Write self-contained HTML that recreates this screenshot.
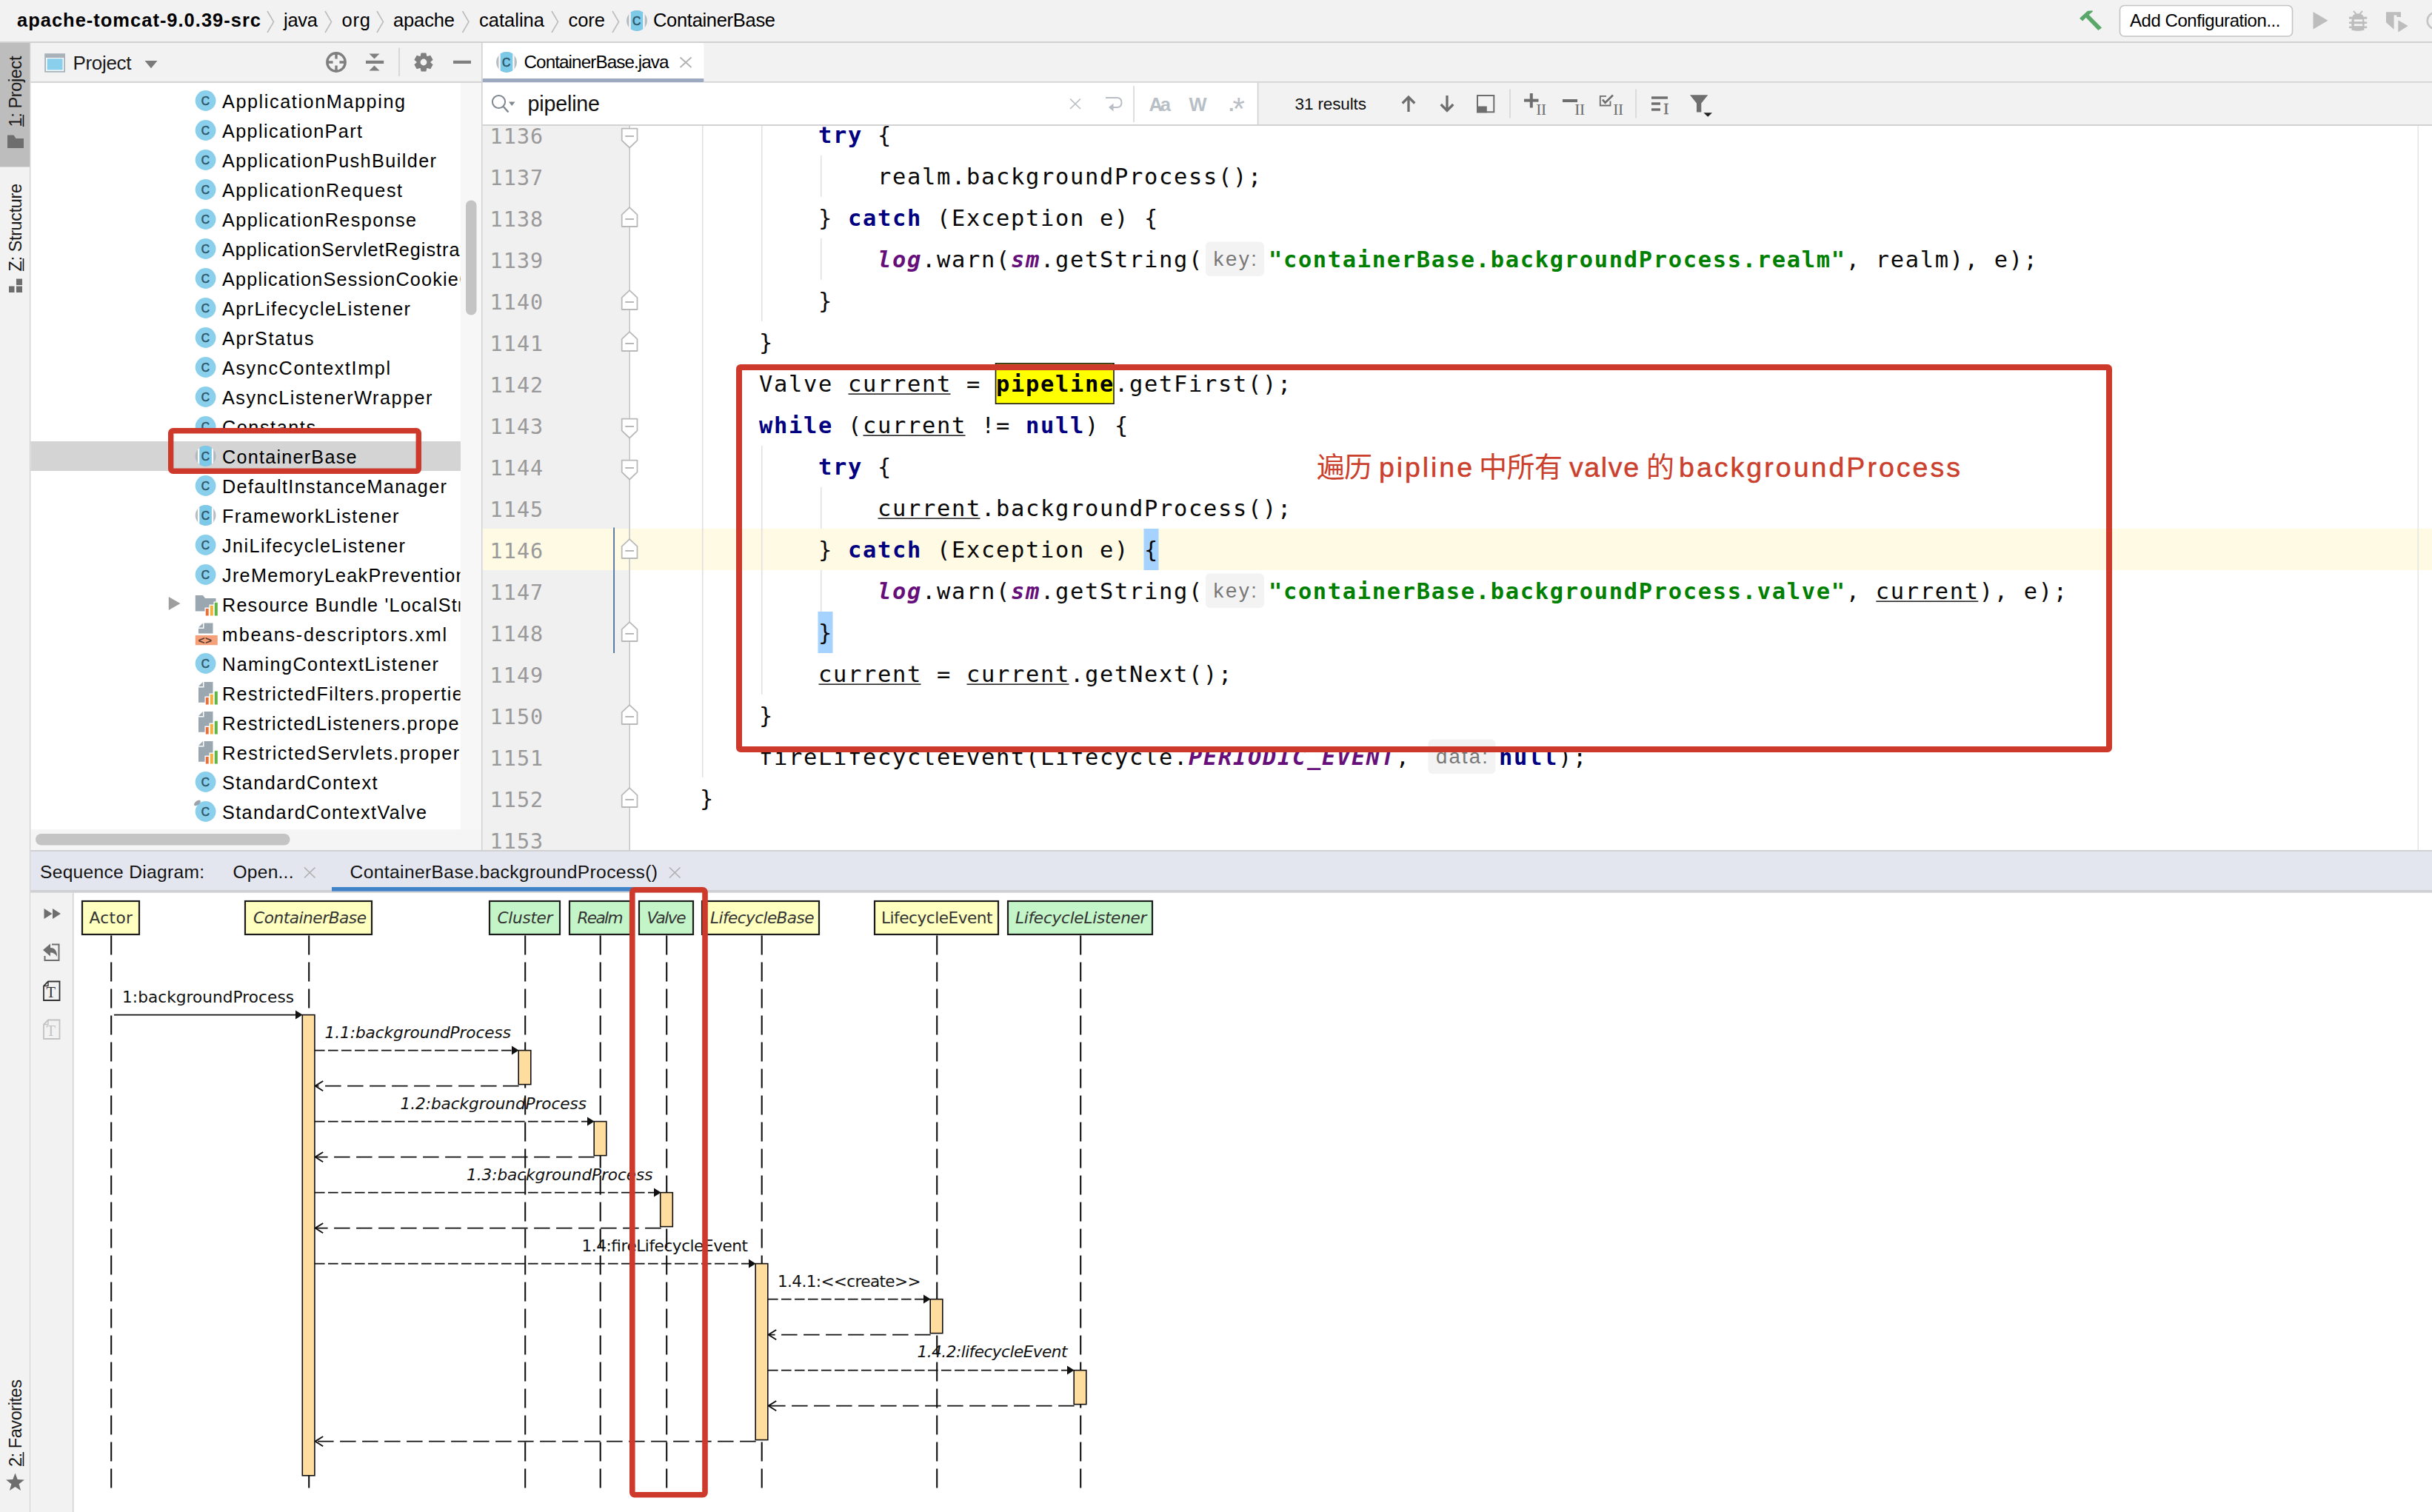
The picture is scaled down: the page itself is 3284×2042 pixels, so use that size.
<!DOCTYPE html>
<html lang="zh"><head><meta charset="utf-8"><title>ContainerBase.java - apache-tomcat-9.0.39-src</title>
<style>html,body{margin:0;padding:0;background:#f2f2f2;width:3284px;height:2042px;overflow:hidden}</style></head>
<body><svg width="3284" height="2042" viewBox="0 0 3284 2042" style="display:block"><rect x="0" y="0" width="3284" height="2042" fill="#f2f2f2" />
<rect x="0" y="0" width="3284" height="56" fill="#f2f2f2" />
<rect x="0" y="56" width="3284" height="2" fill="#d1d1d1" />
<text x="23" y="36" font-family="'Liberation Sans','Noto Sans CJK SC',sans-serif" font-size="25.5" fill="#000" font-weight="bold" textLength="329" lengthAdjust="spacing" >apache-tomcat-9.0.39-src</text>
<path d="M361 15 L369.5 29.5 L361 44" fill="none" stroke="#bcbcbc" stroke-width="1.6" />
<path d="M439 15 L447.5 29.5 L439 44" fill="none" stroke="#bcbcbc" stroke-width="1.6" />
<path d="M509 15 L517.5 29.5 L509 44" fill="none" stroke="#bcbcbc" stroke-width="1.6" />
<path d="M624.5 15 L633 29.5 L624.5 44" fill="none" stroke="#bcbcbc" stroke-width="1.6" />
<path d="M745 15 L753.5 29.5 L745 44" fill="none" stroke="#bcbcbc" stroke-width="1.6" />
<path d="M827 15 L835.5 29.5 L827 44" fill="none" stroke="#bcbcbc" stroke-width="1.6" />
<text x="383" y="36" font-family="'Liberation Sans','Noto Sans CJK SC',sans-serif" font-size="25.5" fill="#000" textLength="46" lengthAdjust="spacing" >java</text>
<text x="461.5" y="36" font-family="'Liberation Sans','Noto Sans CJK SC',sans-serif" font-size="25.5" fill="#000" textLength="38.5" lengthAdjust="spacing" >org</text>
<text x="531" y="36" font-family="'Liberation Sans','Noto Sans CJK SC',sans-serif" font-size="25.5" fill="#000" textLength="83" lengthAdjust="spacing" >apache</text>
<text x="647" y="36" font-family="'Liberation Sans','Noto Sans CJK SC',sans-serif" font-size="25.5" fill="#000" textLength="88" lengthAdjust="spacing" >catalina</text>
<text x="767.5" y="36" font-family="'Liberation Sans','Noto Sans CJK SC',sans-serif" font-size="25.5" fill="#000" textLength="49.5" lengthAdjust="spacing" >core</text>
<circle cx="860" cy="28" r="13.9" fill="#a9b2b8" opacity="0.85"/>
<clipPath id="cp860_28"><circle cx="860" cy="28" r="13.9"/></clipPath>
<rect x="851.7" y="14.1" width="16.6" height="27.8" fill="#7cc9e8" clip-path="url(#cp860_28)"/>
<rect x="849.4" y="14.1" width="2.3" height="27.8" fill="#fafafa" clip-path="url(#cp860_28)"/>
<rect x="868.3" y="14.1" width="2.3" height="27.8" fill="#fafafa" clip-path="url(#cp860_28)"/>
<text x="854.1" y="33.55" font-family="'Liberation Sans','Noto Sans CJK SC',sans-serif" font-size="15.6" fill="#2d556b" stroke="#2d556b" stroke-width="0.6">C</text>
<text x="882" y="36" font-family="'Liberation Sans','Noto Sans CJK SC',sans-serif" font-size="25.5" fill="#000" textLength="165" lengthAdjust="spacing" >ContainerBase</text>
<path d="M2808.1 24.8 L2818.9 14.8 L2825.6 14.3 L2825.8 15.7 L2820.7 20 L2838.1 37.4 L2833.3 41.1 L2816.7 23.7 L2812.2 28.5 Z" fill="#59a869" />
<rect x="2862.5" y="7.5" width="233" height="41.5" rx="6" fill="#fff" stroke="#c4c4c4" stroke-width="1.6"/>
<text x="2876" y="36" font-family="'Liberation Sans','Noto Sans CJK SC',sans-serif" font-size="24" fill="#000" textLength="203.5" lengthAdjust="spacing" >Add Configuration...</text>
<path d="M3123.5 16 L3143.5 27.8 L3123.5 39.5 Z" fill="#bdbdbd" />
<g fill="#bdbdbd"><path d="M3175.6 41.3 Q3175.2 22 3178 20.5 Q3184 17 3190 20.5 Q3192.8 22 3192.4 41.3 Q3184 43.5 3175.6 41.3 Z" transform="translate(0,-0.6)"/><ellipse cx="3184" cy="31" rx="8.8" ry="10.6"/><rect x="3172" y="22.7" width="24.2" height="3"/><rect x="3172" y="29.4" width="24.2" height="2.6"/><rect x="3172" y="35.5" width="24.2" height="2.6"/></g>
<path d="M3178 14.8 L3181.6 19.2 M3190 14.8 L3186.4 19.2" fill="none" stroke="#bdbdbd" stroke-width="2" />
<rect x="3178.8" y="26.3" width="11.4" height="2.8" fill="#f2f2f2" />
<rect x="3178.8" y="32.3" width="11.4" height="2.8" fill="#f2f2f2" />
<path d="M3222 16.3 H3242 V23.1 H3236.4 V20.5 H3232.6 V39.8 L3222 30.3 Z" fill="#bdbdbd" />
<path d="M3238.3 27.3 L3251.6 34.9 L3238.3 43.6 Z" fill="#bdbdbd" />
<circle cx="3288.7" cy="28" r="11" fill="none" stroke="#c4c4c4" stroke-width="2.6"/>
<rect x="0" y="58" width="40" height="1984" fill="#f2f2f2" />
<rect x="0" y="58" width="40" height="167.5" fill="#bdbdbd" />
<rect x="40" y="58" width="1.5" height="1984" fill="#d1d1d1" />
<text transform="translate(28.5,171.5) rotate(-90)" x="0" y="0" font-family="'Liberation Sans','Noto Sans CJK SC',sans-serif" font-size="23.5" fill="#1a1a1a" textLength="96" lengthAdjust="spacing">1: Project</text>
<line x1="31.5" y1="171" x2="31.5" y2="155" stroke="#1a1a1a" stroke-width="1.6" />
<path d="M10 182.5 L18.5 182.5 L21.5 187 L32 187 L32 200 L10 200 Z" fill="#6e6e6e" />
<text transform="translate(28.5,366.5) rotate(-90)" x="0" y="0" font-family="'Liberation Sans','Noto Sans CJK SC',sans-serif" font-size="23.5" fill="#1a1a1a" textLength="118.5" lengthAdjust="spacing">Z: Structure</text>
<line x1="31.5" y1="366" x2="31.5" y2="349" stroke="#1a1a1a" stroke-width="1.6" />
<rect x="12" y="386.5" width="7.5" height="8.5" fill="#6e6e6e" />
<rect x="22" y="386.5" width="8" height="8.5" fill="#6e6e6e" />
<rect x="22" y="376.5" width="8" height="8.5" fill="#6e6e6e" />
<text transform="translate(28.5,1981) rotate(-90)" x="0" y="0" font-family="'Liberation Sans','Noto Sans CJK SC',sans-serif" font-size="23.5" fill="#1a1a1a" textLength="118" lengthAdjust="spacing">2: Favorites</text>
<line x1="31.5" y1="1980" x2="31.5" y2="1961" stroke="#1a1a1a" stroke-width="1.6" />
<polygon points="20.5,1989.5 23.7,1998.1 32.9,1998.5 25.6,2004.2 28.1,2013.0 20.5,2007.9 12.9,2013.0 15.4,2004.2 8.1,1998.5 17.3,1998.1" fill="#6e6e6e"/>
<rect x="41.5" y="58" width="609" height="52" fill="#f2f2f2" />
<rect x="41.5" y="110" width="609" height="1.8" fill="#d1d1d1" />
<rect x="60.2" y="72.2" width="27.8" height="25.5" fill="#a9b2b8" />
<rect x="62" y="78" width="24.2" height="17.9" fill="#f7fbfd" />
<rect x="63.6" y="79.2" width="21" height="15.2" fill="#8ad0ec" />
<text x="98.5" y="94" font-family="'Liberation Sans','Noto Sans CJK SC',sans-serif" font-size="26" fill="#1a1a1a" textLength="79" lengthAdjust="spacing" >Project</text>
<path d="M195.5 82 L212.5 82 L204 92.2 Z" fill="#7a7a7a" />
<g stroke="#7f7f7f" stroke-width="3.4" fill="none"><circle cx="454" cy="84" r="12.2"/><path d="M454 72 V79.6 M454 88.4 V96 M442 84 H449.6 M458.4 84 H466"/></g>
<g fill="#7f7f7f"><rect x="494" y="81.8" width="24.2" height="4.2"/><path d="M498.5 72.5 L512.5 72.5 L505.5 79.5 Z"/><path d="M498.5 95.5 L512.5 95.5 L505.5 88.5 Z"/></g>
<rect x="538.3" y="64.5" width="1.5" height="38.5" fill="#cfcfcf" />
<g transform="translate(572,84)" fill="#7f7f7f"><path d="M-3.4 -12.6 H3.4 L4.8 -6 H-4.8 Z M-3.4 12.6 H3.4 L4.8 6 H-4.8 Z" transform="rotate(0)"/><path d="M-3.4 -12.6 H3.4 L4.8 -6 H-4.8 Z M-3.4 12.6 H3.4 L4.8 6 H-4.8 Z" transform="rotate(60)"/><path d="M-3.4 -12.6 H3.4 L4.8 -6 H-4.8 Z M-3.4 12.6 H3.4 L4.8 6 H-4.8 Z" transform="rotate(120)"/><circle r="9.3"/><circle r="4.4" fill="#f2f2f2"/></g>
<rect x="612" y="81.8" width="24" height="4.2" fill="#7f7f7f" />
<rect x="41.5" y="112" width="580.5" height="1008.5" fill="#fff" />
<rect x="622" y="112" width="28.5" height="1008.5" fill="#f7f7f7" />
<rect x="629" y="270.5" width="14.5" height="155" rx="7.2" fill="#c4c4c4"/>
<rect x="41.5" y="1120.5" width="609" height="27.5" fill="#f5f5f5" />
<rect x="48" y="1126" width="343.5" height="15.5" rx="7.7" fill="#c4c4c4"/>
<rect x="650" y="58" width="1.8" height="1090" fill="#d1d1d1" />
<rect x="41.5" y="596" width="580.5" height="40" fill="#d4d4d4" />
<clipPath id="treeclip"><rect x="41.5" y="112" width="580" height="1008.5"/></clipPath>
<g clip-path="url(#treeclip)">
<circle cx="277.6" cy="136" r="13.9" fill="#8ad0ec"/>
<text x="271.7" y="141.55" font-family="'Liberation Sans','Noto Sans CJK SC',sans-serif" font-size="15.6" fill="#2d556b" stroke="#2d556b" stroke-width="0.6">C</text>
<text x="300" y="145.5" font-family="'Liberation Sans','Noto Sans CJK SC',sans-serif" font-size="25.2" fill="#000" textLength="247" lengthAdjust="spacing" >ApplicationMapping</text>
<circle cx="277.6" cy="176" r="13.9" fill="#8ad0ec"/>
<text x="271.7" y="181.55" font-family="'Liberation Sans','Noto Sans CJK SC',sans-serif" font-size="15.6" fill="#2d556b" stroke="#2d556b" stroke-width="0.6">C</text>
<text x="300" y="185.5" font-family="'Liberation Sans','Noto Sans CJK SC',sans-serif" font-size="25.2" fill="#000" textLength="189" lengthAdjust="spacing" >ApplicationPart</text>
<circle cx="277.6" cy="216" r="13.9" fill="#8ad0ec"/>
<text x="271.7" y="221.55" font-family="'Liberation Sans','Noto Sans CJK SC',sans-serif" font-size="15.6" fill="#2d556b" stroke="#2d556b" stroke-width="0.6">C</text>
<text x="300" y="225.5" font-family="'Liberation Sans','Noto Sans CJK SC',sans-serif" font-size="25.2" fill="#000" textLength="289" lengthAdjust="spacing" >ApplicationPushBuilder</text>
<circle cx="277.6" cy="256" r="13.9" fill="#8ad0ec"/>
<text x="271.7" y="261.55" font-family="'Liberation Sans','Noto Sans CJK SC',sans-serif" font-size="15.6" fill="#2d556b" stroke="#2d556b" stroke-width="0.6">C</text>
<text x="300" y="265.5" font-family="'Liberation Sans','Noto Sans CJK SC',sans-serif" font-size="25.2" fill="#000" textLength="243" lengthAdjust="spacing" >ApplicationRequest</text>
<circle cx="277.6" cy="296" r="13.9" fill="#8ad0ec"/>
<text x="271.7" y="301.55" font-family="'Liberation Sans','Noto Sans CJK SC',sans-serif" font-size="15.6" fill="#2d556b" stroke="#2d556b" stroke-width="0.6">C</text>
<text x="300" y="305.5" font-family="'Liberation Sans','Noto Sans CJK SC',sans-serif" font-size="25.2" fill="#000" textLength="262" lengthAdjust="spacing" >ApplicationResponse</text>
<circle cx="277.6" cy="336" r="13.9" fill="#8ad0ec"/>
<text x="271.7" y="341.55" font-family="'Liberation Sans','Noto Sans CJK SC',sans-serif" font-size="15.6" fill="#2d556b" stroke="#2d556b" stroke-width="0.6">C</text>
<text x="300" y="345.5" font-family="'Liberation Sans','Noto Sans CJK SC',sans-serif" font-size="25.2" fill="#000" letter-spacing="1" >ApplicationServletRegistration</text>
<circle cx="277.6" cy="376" r="13.9" fill="#8ad0ec"/>
<text x="271.7" y="381.55" font-family="'Liberation Sans','Noto Sans CJK SC',sans-serif" font-size="15.6" fill="#2d556b" stroke="#2d556b" stroke-width="0.6">C</text>
<text x="300" y="385.5" font-family="'Liberation Sans','Noto Sans CJK SC',sans-serif" font-size="25.2" fill="#000" letter-spacing="1.2" >ApplicationSessionCookieConfig</text>
<circle cx="277.6" cy="416" r="13.9" fill="#8ad0ec"/>
<text x="271.7" y="421.55" font-family="'Liberation Sans','Noto Sans CJK SC',sans-serif" font-size="15.6" fill="#2d556b" stroke="#2d556b" stroke-width="0.6">C</text>
<text x="300" y="425.5" font-family="'Liberation Sans','Noto Sans CJK SC',sans-serif" font-size="25.2" fill="#000" textLength="254" lengthAdjust="spacing" >AprLifecycleListener</text>
<circle cx="277.6" cy="456" r="13.9" fill="#8ad0ec"/>
<text x="271.7" y="461.55" font-family="'Liberation Sans','Noto Sans CJK SC',sans-serif" font-size="15.6" fill="#2d556b" stroke="#2d556b" stroke-width="0.6">C</text>
<text x="300" y="465.5" font-family="'Liberation Sans','Noto Sans CJK SC',sans-serif" font-size="25.2" fill="#000" textLength="123.5" lengthAdjust="spacing" >AprStatus</text>
<circle cx="277.6" cy="496" r="13.9" fill="#8ad0ec"/>
<text x="271.7" y="501.55" font-family="'Liberation Sans','Noto Sans CJK SC',sans-serif" font-size="15.6" fill="#2d556b" stroke="#2d556b" stroke-width="0.6">C</text>
<text x="300" y="505.5" font-family="'Liberation Sans','Noto Sans CJK SC',sans-serif" font-size="25.2" fill="#000" textLength="227" lengthAdjust="spacing" >AsyncContextImpl</text>
<circle cx="277.6" cy="536" r="13.9" fill="#8ad0ec"/>
<text x="271.7" y="541.55" font-family="'Liberation Sans','Noto Sans CJK SC',sans-serif" font-size="15.6" fill="#2d556b" stroke="#2d556b" stroke-width="0.6">C</text>
<text x="300" y="545.5" font-family="'Liberation Sans','Noto Sans CJK SC',sans-serif" font-size="25.2" fill="#000" textLength="283.5" lengthAdjust="spacing" >AsyncListenerWrapper</text>
<circle cx="277.6" cy="576" r="13.9" fill="#8ad0ec"/>
<text x="271.7" y="581.55" font-family="'Liberation Sans','Noto Sans CJK SC',sans-serif" font-size="15.6" fill="#2d556b" stroke="#2d556b" stroke-width="0.6">C</text>
<text x="300" y="585.5" font-family="'Liberation Sans','Noto Sans CJK SC',sans-serif" font-size="25.2" fill="#000" textLength="126" lengthAdjust="spacing" >Constants</text>
<circle cx="277.6" cy="616" r="13.9" fill="#a9b2b8" opacity="0.85"/>
<clipPath id="cp277_616"><circle cx="277.6" cy="616" r="13.9"/></clipPath>
<rect x="269.3" y="602.1" width="16.6" height="27.8" fill="#7cc9e8" clip-path="url(#cp277_616)"/>
<rect x="267" y="602.1" width="2.3" height="27.8" fill="#fafafa" clip-path="url(#cp277_616)"/>
<rect x="285.9" y="602.1" width="2.3" height="27.8" fill="#fafafa" clip-path="url(#cp277_616)"/>
<text x="271.7" y="621.55" font-family="'Liberation Sans','Noto Sans CJK SC',sans-serif" font-size="15.6" fill="#2d556b" stroke="#2d556b" stroke-width="0.6">C</text>
<text x="300" y="625.5" font-family="'Liberation Sans','Noto Sans CJK SC',sans-serif" font-size="25.2" fill="#000" textLength="181.5" lengthAdjust="spacing" >ContainerBase</text>
<circle cx="277.6" cy="656" r="13.9" fill="#8ad0ec"/>
<text x="271.7" y="661.55" font-family="'Liberation Sans','Noto Sans CJK SC',sans-serif" font-size="15.6" fill="#2d556b" stroke="#2d556b" stroke-width="0.6">C</text>
<text x="300" y="665.5" font-family="'Liberation Sans','Noto Sans CJK SC',sans-serif" font-size="25.2" fill="#000" textLength="303" lengthAdjust="spacing" >DefaultInstanceManager</text>
<circle cx="277.6" cy="696" r="13.9" fill="#a9b2b8" opacity="0.85"/>
<clipPath id="cp277_696"><circle cx="277.6" cy="696" r="13.9"/></clipPath>
<rect x="269.3" y="682.1" width="16.6" height="27.8" fill="#7cc9e8" clip-path="url(#cp277_696)"/>
<rect x="267" y="682.1" width="2.3" height="27.8" fill="#fafafa" clip-path="url(#cp277_696)"/>
<rect x="285.9" y="682.1" width="2.3" height="27.8" fill="#fafafa" clip-path="url(#cp277_696)"/>
<text x="271.7" y="701.55" font-family="'Liberation Sans','Noto Sans CJK SC',sans-serif" font-size="15.6" fill="#2d556b" stroke="#2d556b" stroke-width="0.6">C</text>
<text x="300" y="705.5" font-family="'Liberation Sans','Noto Sans CJK SC',sans-serif" font-size="25.2" fill="#000" textLength="238.5" lengthAdjust="spacing" >FrameworkListener</text>
<circle cx="277.6" cy="736" r="13.9" fill="#8ad0ec"/>
<text x="271.7" y="741.55" font-family="'Liberation Sans','Noto Sans CJK SC',sans-serif" font-size="15.6" fill="#2d556b" stroke="#2d556b" stroke-width="0.6">C</text>
<text x="300" y="745.5" font-family="'Liberation Sans','Noto Sans CJK SC',sans-serif" font-size="25.2" fill="#000" textLength="247" lengthAdjust="spacing" >JniLifecycleListener</text>
<circle cx="277.6" cy="776" r="13.9" fill="#8ad0ec"/>
<text x="271.7" y="781.55" font-family="'Liberation Sans','Noto Sans CJK SC',sans-serif" font-size="15.6" fill="#2d556b" stroke="#2d556b" stroke-width="0.6">C</text>
<text x="300" y="785.5" font-family="'Liberation Sans','Noto Sans CJK SC',sans-serif" font-size="25.2" fill="#000" letter-spacing="1.3" >JreMemoryLeakPreventionListener</text>
<path d="M227.8 806 L243.5 815 L227.8 824 Z" fill="#9e9e9e" />
<path d="M263.8 804 L274 804 L277 808 L291.5 808 L291.5 825.6 L263.8 825.6 Z" fill="#9aa7b0" />
<rect x="276.5" y="820.5" width="7.2" height="11.5" fill="#fff" />
<rect x="282.5" y="816.5" width="7.2" height="15.5" fill="#fff" />
<rect x="288.5" y="812.5" width="7" height="19.5" fill="#fff" />
<rect x="277.8" y="822" width="3.9" height="9.5" fill="#e8703a" />
<rect x="283.8" y="817.8" width="4" height="13.7" fill="#f4af3d" />
<rect x="289.8" y="813.8" width="4" height="17.7" fill="#62b543" />
<text x="300" y="825.5" font-family="'Liberation Sans','Noto Sans CJK SC',sans-serif" font-size="25.2" fill="#000" letter-spacing="1.2" >Resource Bundle 'LocalStrings'</text>
<path d="M275.5 841.6 L287.5 841.6 L287.5 855.6 L268 855.6 L268 849 L275.5 849 Z" fill="#9aa7b0" />
<path d="M268 847.5 L274 841.6 L274 847.5 Z" fill="#9aa7b0" />
<rect x="263.8" y="858" width="30" height="13.2" fill="#f4a07a" />
<text x="267.6" y="869.6" font-family="'Liberation Sans','Noto Sans CJK SC',sans-serif" font-size="15.5" fill="#5a3a2a" font-weight="bold" textLength="18.4" lengthAdjust="spacing" >&lt;&gt;</text>
<text x="300" y="865.5" font-family="'Liberation Sans','Noto Sans CJK SC',sans-serif" font-size="25.2" fill="#000" textLength="303" lengthAdjust="spacing" >mbeans-descriptors.xml</text>
<circle cx="277.6" cy="896" r="13.9" fill="#8ad0ec"/>
<text x="271.7" y="901.55" font-family="'Liberation Sans','Noto Sans CJK SC',sans-serif" font-size="15.6" fill="#2d556b" stroke="#2d556b" stroke-width="0.6">C</text>
<text x="300" y="905.5" font-family="'Liberation Sans','Noto Sans CJK SC',sans-serif" font-size="25.2" fill="#000" textLength="292" lengthAdjust="spacing" >NamingContextListener</text>
<path d="M275.5 921 L287.5 921 L287.5 948.8 L268 948.8 L268 928.5 L275.5 928.5 Z" fill="#9aa7b0" />
<path d="M268 927 L274 921 L274 927 Z" fill="#9aa7b0" />
<rect x="276.5" y="940.5" width="7.2" height="11.5" fill="#fff" />
<rect x="282.5" y="936.5" width="7.2" height="15.5" fill="#fff" />
<rect x="288.5" y="932.5" width="7" height="19.5" fill="#fff" />
<rect x="277.8" y="942" width="3.9" height="9.5" fill="#e8703a" />
<rect x="283.8" y="937.8" width="4" height="13.7" fill="#f4af3d" />
<rect x="289.8" y="933.8" width="4" height="17.7" fill="#62b543" />
<text x="300" y="945.5" font-family="'Liberation Sans','Noto Sans CJK SC',sans-serif" font-size="25.2" fill="#000" letter-spacing="1.4" >RestrictedFilters.properties</text>
<path d="M275.5 961 L287.5 961 L287.5 988.8 L268 988.8 L268 968.5 L275.5 968.5 Z" fill="#9aa7b0" />
<path d="M268 967 L274 961 L274 967 Z" fill="#9aa7b0" />
<rect x="276.5" y="980.5" width="7.2" height="11.5" fill="#fff" />
<rect x="282.5" y="976.5" width="7.2" height="15.5" fill="#fff" />
<rect x="288.5" y="972.5" width="7" height="19.5" fill="#fff" />
<rect x="277.8" y="982" width="3.9" height="9.5" fill="#e8703a" />
<rect x="283.8" y="977.8" width="4" height="13.7" fill="#f4af3d" />
<rect x="289.8" y="973.8" width="4" height="17.7" fill="#62b543" />
<text x="300" y="985.5" font-family="'Liberation Sans','Noto Sans CJK SC',sans-serif" font-size="25.2" fill="#000" letter-spacing="1.35" >RestrictedListeners.properties</text>
<path d="M275.5 1001 L287.5 1001 L287.5 1028.8 L268 1028.8 L268 1008.5 L275.5 1008.5 Z" fill="#9aa7b0" />
<path d="M268 1007 L274 1001 L274 1007 Z" fill="#9aa7b0" />
<rect x="276.5" y="1020.5" width="7.2" height="11.5" fill="#fff" />
<rect x="282.5" y="1016.5" width="7.2" height="15.5" fill="#fff" />
<rect x="288.5" y="1012.5" width="7" height="19.5" fill="#fff" />
<rect x="277.8" y="1022" width="3.9" height="9.5" fill="#e8703a" />
<rect x="283.8" y="1017.8" width="4" height="13.7" fill="#f4af3d" />
<rect x="289.8" y="1013.8" width="4" height="17.7" fill="#62b543" />
<text x="300" y="1025.5" font-family="'Liberation Sans','Noto Sans CJK SC',sans-serif" font-size="25.2" fill="#000" letter-spacing="1.5" >RestrictedServlets.properties</text>
<circle cx="277.6" cy="1056" r="13.9" fill="#8ad0ec"/>
<text x="271.7" y="1061.55" font-family="'Liberation Sans','Noto Sans CJK SC',sans-serif" font-size="15.6" fill="#2d556b" stroke="#2d556b" stroke-width="0.6">C</text>
<text x="300" y="1065.5" font-family="'Liberation Sans','Noto Sans CJK SC',sans-serif" font-size="25.2" fill="#000" textLength="209.5" lengthAdjust="spacing" >StandardContext</text>
<circle cx="277.6" cy="1096" r="13.9" fill="#8ad0ec"/>
<text x="271.7" y="1101.55" font-family="'Liberation Sans','Noto Sans CJK SC',sans-serif" font-size="15.6" fill="#2d556b" stroke="#2d556b" stroke-width="0.6">C</text>
<ellipse cx="266.4" cy="1084.4" rx="5.2" ry="2.7" fill="#9aa3a9" transform="rotate(-38 266.4 1084.4)"/>
<text x="300" y="1105.5" font-family="'Liberation Sans','Noto Sans CJK SC',sans-serif" font-size="25.2" fill="#000" textLength="276" lengthAdjust="spacing" >StandardContextValve</text>
</g>
<rect x="232" y="583" width="333" height="13" fill="#fff" />
<rect x="230.7" y="581.7" width="334.6" height="54.6" rx="3" fill="none" stroke="#cd3a2b" stroke-width="7.4"/>
<rect x="651.8" y="58" width="2632.2" height="52" fill="#f2f2f2" />
<rect x="651.8" y="58" width="298.5" height="48.5" fill="#fff" />
<rect x="651.8" y="106" width="298.5" height="5.2" fill="#9ca9c1" />
<rect x="950.3" y="110" width="2333.7" height="1.8" fill="#d1d1d1" />
<circle cx="684" cy="84" r="13.9" fill="#a9b2b8" opacity="0.85"/>
<clipPath id="cp684_84"><circle cx="684" cy="84" r="13.9"/></clipPath>
<rect x="675.7" y="70.1" width="16.6" height="27.8" fill="#7cc9e8" clip-path="url(#cp684_84)"/>
<rect x="673.4" y="70.1" width="2.3" height="27.8" fill="#fafafa" clip-path="url(#cp684_84)"/>
<rect x="692.3" y="70.1" width="2.3" height="27.8" fill="#fafafa" clip-path="url(#cp684_84)"/>
<text x="678.1" y="89.55" font-family="'Liberation Sans','Noto Sans CJK SC',sans-serif" font-size="15.6" fill="#2d556b" stroke="#2d556b" stroke-width="0.6">C</text>
<text x="707.5" y="92" font-family="'Liberation Sans','Noto Sans CJK SC',sans-serif" font-size="24.2" fill="#000" textLength="196" lengthAdjust="spacing" >ContainerBase.java</text>
<path d="M918.5 77.5 L933.5 91 M933.5 77.5 L918.5 91" fill="none" stroke="#b0b0b0" stroke-width="1.7" />
<rect x="651.8" y="111.8" width="2632.2" height="56.4" fill="#f2f2f2" />
<rect x="651.8" y="111.8" width="1046" height="56.4" fill="#fff" />
<rect x="1697.8" y="111.8" width="1.6" height="56.4" fill="#d1d1d1" />
<rect x="651.8" y="168" width="2632.2" height="1.9" fill="#d1d1d1" />
<g stroke="#7f8790" stroke-width="2" fill="none"><circle cx="673.5" cy="137.5" r="8.6"/><path d="M679.8 144 L686.5 151.5" stroke-width="2.4"/></g>
<path d="M687 137.5 L695.5 137.5 L691.2 143 Z" fill="#7f8790" />
<text x="712.5" y="149.5" font-family="'Liberation Sans','Noto Sans CJK SC',sans-serif" font-size="28.6" fill="#111" textLength="97.5" lengthAdjust="spacing" >pipeline</text>
<path d="M1445 133.5 L1459 147 M1459 133.5 L1445 147" fill="none" stroke="#b9bdc4" stroke-width="1.7" />
<g stroke="#b9bdc4" stroke-width="2" fill="none"><path d="M1493 132 H1508 Q1514.5 132 1514.5 138.5 Q1514.5 145 1508 145 H1500"/></g>
<path d="M1497 145 L1503.5 139.5 L1503.5 150.5 Z" fill="#b9bdc4" />
<rect x="1530.3" y="116" width="1.5" height="49" fill="#d4d4d4" />
<text x="1551.5" y="149.5" font-family="'Liberation Sans','Noto Sans CJK SC',sans-serif" font-size="25.5" fill="#b9bfc6" font-weight="bold" textLength="29.5" lengthAdjust="spacing" >Aa</text>
<text x="1605.5" y="149.5" font-family="'Liberation Sans','Noto Sans CJK SC',sans-serif" font-size="25.5" fill="#b9bfc6" font-weight="bold" >W</text>
<text x="1659" y="149.5" font-family="'Liberation Sans','Noto Sans CJK SC',sans-serif" font-size="27" fill="#b9bfc6" font-weight="bold" >.</text>
<text x="1664.5" y="160.5" font-family="'Liberation Sans','Noto Sans CJK SC',sans-serif" font-size="42" fill="#b9bfc6" >*</text>
<text x="1748.5" y="147.5" font-family="'Liberation Sans','Noto Sans CJK SC',sans-serif" font-size="22.6" fill="#111" textLength="96.5" lengthAdjust="spacing" >31 results</text>
<path d="M1902 151 V131 M1893.7 139.5 L1902 131 L1910.3 139.5" fill="none" stroke="#6e6e6e" stroke-width="3.3" />
<path d="M1954 129 V149.5 M1945.7 141 L1954 149.5 L1962.3 141" fill="none" stroke="#6e6e6e" stroke-width="3.3" />
<rect x="1995" y="129" width="22.3" height="22.3" fill="none" stroke="#6e6e6e" stroke-width="2"/>
<rect x="1994" y="143.5" width="13.8" height="8.8" fill="#6e6e6e" />
<rect x="2038.3" y="120.5" width="1.5" height="39" fill="#d4d4d4" />
<rect x="2058" y="133.6" width="19.5" height="4" fill="#6e6e6e" />
<rect x="2065.8" y="126" width="4" height="19.5" fill="#6e6e6e" />
<text x="2074.2" y="155.1" font-family="'Liberation Serif','DejaVu Serif',serif" font-size="21.5" fill="#6e6e6e" textLength="13.9" lengthAdjust="spacing" >II</text>
<rect x="2110" y="134" width="20" height="4" fill="#6e6e6e" />
<text x="2126.2" y="155.1" font-family="'Liberation Serif','DejaVu Serif',serif" font-size="21.5" fill="#6e6e6e" textLength="13.9" lengthAdjust="spacing" >II</text>
<path d="M2174.5 136.5 V142.5 H2160.8 V129.8 H2169" fill="none" stroke="#6e6e6e" stroke-width="1.8"/>
<path d="M2164 134.5 L2167.5 138.8 L2178 128.5" fill="none" stroke="#6e6e6e" stroke-width="2.6" />
<text x="2178.2" y="155.1" font-family="'Liberation Serif','DejaVu Serif',serif" font-size="21.5" fill="#6e6e6e" textLength="13.9" lengthAdjust="spacing" >II</text>
<rect x="2208.3" y="120.5" width="1.5" height="39" fill="#d4d4d4" />
<rect x="2230" y="130.3" width="22" height="3.4" fill="#6e6e6e" />
<rect x="2230" y="138.3" width="12" height="3.4" fill="#6e6e6e" />
<rect x="2230" y="146.3" width="12" height="3.4" fill="#6e6e6e" />
<text x="2246.2" y="153.9" font-family="'Liberation Serif','DejaVu Serif',serif" font-size="21.5" fill="#6e6e6e" stroke="#6e6e6e" stroke-width="0.4">I</text>
<path d="M2282 128.3 L2306.3 128.3 L2297.3 139.5 L2297.3 151.5 L2291 151.5 L2291 139.5 Z" fill="#6e6e6e" />
<path d="M2300.5 152.3 L2312 152.3 L2306.2 157.8 Z" fill="#222" />
<rect x="651.8" y="170" width="2632.2" height="978" fill="#fff" />
<rect x="651.8" y="170" width="197" height="978" fill="#f0f0f0" />
<rect x="651.8" y="714" width="2632.2" height="56" fill="#fffae3" />
<rect x="849.2" y="170" width="1.8" height="978" fill="#cacaca" />
<rect x="3264.5" y="170" width="1.4" height="978" fill="#e3e3e3" />
<clipPath id="edclip"><rect x="651.8" y="170" width="2632.2" height="978"/></clipPath>
<g clip-path="url(#edclip)">
<rect x="828.2" y="712.5" width="1.8" height="169.5" fill="#4f6f9f" />
<rect x="947.9" y="154" width="1.7" height="896" fill="#e1e1e1" />
<rect x="1027.9" y="154" width="1.7" height="280" fill="#e1e1e1" />
<rect x="1027.9" y="602" width="1.7" height="336" fill="#e1e1e1" />
<rect x="1107.9" y="210" width="1.7" height="56" fill="#e1e1e1" />
<rect x="1107.9" y="322" width="1.7" height="56" fill="#e1e1e1" />
<rect x="1107.9" y="658" width="1.7" height="56" fill="#e1e1e1" />
<rect x="1107.9" y="770" width="1.7" height="56" fill="#e1e1e1" />
<rect x="1544.5" y="714" width="20" height="56" fill="#a6d2ff" />
<rect x="1104.5" y="826" width="20" height="56" fill="#a6d2ff" />
<rect x="1344.5" y="490.8" width="159.5" height="54.4" fill="#ffff00" stroke="#1a1a1a" stroke-width="1.6"/>
<text x="661.4" y="193.8" font-family="'DejaVu Sans Mono','Liberation Mono',monospace" font-size="28.4" fill="#999999" letter-spacing="1.15178" >1136</text>
<text x="661.4" y="249.8" font-family="'DejaVu Sans Mono','Liberation Mono',monospace" font-size="28.4" fill="#999999" letter-spacing="1.15178" >1137</text>
<text x="661.4" y="305.8" font-family="'DejaVu Sans Mono','Liberation Mono',monospace" font-size="28.4" fill="#999999" letter-spacing="1.15178" >1138</text>
<text x="661.4" y="361.8" font-family="'DejaVu Sans Mono','Liberation Mono',monospace" font-size="28.4" fill="#999999" letter-spacing="1.15178" >1139</text>
<text x="661.4" y="417.8" font-family="'DejaVu Sans Mono','Liberation Mono',monospace" font-size="28.4" fill="#999999" letter-spacing="1.15178" >1140</text>
<text x="661.4" y="473.8" font-family="'DejaVu Sans Mono','Liberation Mono',monospace" font-size="28.4" fill="#999999" letter-spacing="1.15178" >1141</text>
<text x="661.4" y="529.8" font-family="'DejaVu Sans Mono','Liberation Mono',monospace" font-size="28.4" fill="#999999" letter-spacing="1.15178" >1142</text>
<text x="661.4" y="585.8" font-family="'DejaVu Sans Mono','Liberation Mono',monospace" font-size="28.4" fill="#999999" letter-spacing="1.15178" >1143</text>
<text x="661.4" y="641.8" font-family="'DejaVu Sans Mono','Liberation Mono',monospace" font-size="28.4" fill="#999999" letter-spacing="1.15178" >1144</text>
<text x="661.4" y="697.8" font-family="'DejaVu Sans Mono','Liberation Mono',monospace" font-size="28.4" fill="#999999" letter-spacing="1.15178" >1145</text>
<text x="661.4" y="753.8" font-family="'DejaVu Sans Mono','Liberation Mono',monospace" font-size="28.4" fill="#999999" letter-spacing="1.15178" >1146</text>
<text x="661.4" y="809.8" font-family="'DejaVu Sans Mono','Liberation Mono',monospace" font-size="28.4" fill="#999999" letter-spacing="1.15178" >1147</text>
<text x="661.4" y="865.8" font-family="'DejaVu Sans Mono','Liberation Mono',monospace" font-size="28.4" fill="#999999" letter-spacing="1.15178" >1148</text>
<text x="661.4" y="921.8" font-family="'DejaVu Sans Mono','Liberation Mono',monospace" font-size="28.4" fill="#999999" letter-spacing="1.15178" >1149</text>
<text x="661.4" y="977.8" font-family="'DejaVu Sans Mono','Liberation Mono',monospace" font-size="28.4" fill="#999999" letter-spacing="1.15178" >1150</text>
<text x="661.4" y="1033.8" font-family="'DejaVu Sans Mono','Liberation Mono',monospace" font-size="28.4" fill="#999999" letter-spacing="1.15178" >1151</text>
<text x="661.4" y="1089.8" font-family="'DejaVu Sans Mono','Liberation Mono',monospace" font-size="28.4" fill="#999999" letter-spacing="1.15178" >1152</text>
<text x="661.4" y="1145.8" font-family="'DejaVu Sans Mono','Liberation Mono',monospace" font-size="28.4" fill="#999999" letter-spacing="1.15178" >1153</text>
<path d="M839.7 173.6 H860.5 V189.6 L850.1 199.5 L839.7 189.6 Z" fill="#fff" stroke="#b9b9b9" stroke-width="1.8" stroke-linejoin="round"/>
<rect x="844.3" y="183" width="11.6" height="1.8" fill="#b0b0b0" />
<path d="M839.7 306 H860.5 V289.8 L850.1 280.2 L839.7 289.8 Z" fill="#fff" stroke="#b9b9b9" stroke-width="1.8" stroke-linejoin="round"/>
<rect x="844.3" y="295" width="11.6" height="1.8" fill="#b0b0b0" />
<path d="M839.7 418 H860.5 V401.8 L850.1 392.2 L839.7 401.8 Z" fill="#fff" stroke="#b9b9b9" stroke-width="1.8" stroke-linejoin="round"/>
<rect x="844.3" y="407" width="11.6" height="1.8" fill="#b0b0b0" />
<path d="M839.7 474 H860.5 V457.8 L850.1 448.2 L839.7 457.8 Z" fill="#fff" stroke="#b9b9b9" stroke-width="1.8" stroke-linejoin="round"/>
<rect x="844.3" y="463" width="11.6" height="1.8" fill="#b0b0b0" />
<path d="M839.7 565.6 H860.5 V581.6 L850.1 591.5 L839.7 581.6 Z" fill="#fff" stroke="#b9b9b9" stroke-width="1.8" stroke-linejoin="round"/>
<rect x="844.3" y="575" width="11.6" height="1.8" fill="#b0b0b0" />
<path d="M839.7 621.6 H860.5 V637.6 L850.1 647.5 L839.7 637.6 Z" fill="#fff" stroke="#b9b9b9" stroke-width="1.8" stroke-linejoin="round"/>
<rect x="844.3" y="631" width="11.6" height="1.8" fill="#b0b0b0" />
<path d="M839.7 754 H860.5 V737.8 L850.1 728.2 L839.7 737.8 Z" fill="#fff" stroke="#b9b9b9" stroke-width="1.8" stroke-linejoin="round"/>
<rect x="844.3" y="743" width="11.6" height="1.8" fill="#b0b0b0" />
<path d="M839.7 866 H860.5 V849.8 L850.1 840.2 L839.7 849.8 Z" fill="#fff" stroke="#b9b9b9" stroke-width="1.8" stroke-linejoin="round"/>
<rect x="844.3" y="855" width="11.6" height="1.8" fill="#b0b0b0" />
<path d="M839.7 978 H860.5 V961.8 L850.1 952.2 L839.7 961.8 Z" fill="#fff" stroke="#b9b9b9" stroke-width="1.8" stroke-linejoin="round"/>
<rect x="844.3" y="967" width="11.6" height="1.8" fill="#b0b0b0" />
<path d="M839.7 1090 H860.5 V1073.8 L850.1 1064.2 L839.7 1073.8 Z" fill="#fff" stroke="#b9b9b9" stroke-width="1.8" stroke-linejoin="round"/>
<rect x="844.3" y="1079" width="11.6" height="1.8" fill="#b0b0b0" />
<text x="1105.1" y="193" font-family="'DejaVu Sans Mono','Liberation Mono',monospace" font-size="30.4" letter-spacing="1.6977" fill="#080808" xml:space="preserve"><tspan fill="#000080" font-weight="bold">try</tspan><tspan> {</tspan></text>
<text x="1185.1" y="249" font-family="'DejaVu Sans Mono','Liberation Mono',monospace" font-size="30.4" letter-spacing="1.6977" fill="#080808" xml:space="preserve"><tspan>realm.backgroundProcess();</tspan></text>
<text x="1105.1" y="305" font-family="'DejaVu Sans Mono','Liberation Mono',monospace" font-size="30.4" letter-spacing="1.6977" fill="#080808" xml:space="preserve"><tspan>} </tspan><tspan fill="#000080" font-weight="bold">catch</tspan><tspan> (Exception e) {</tspan></text>
<text x="1185.1" y="361" font-family="'DejaVu Sans Mono','Liberation Mono',monospace" font-size="30.4" letter-spacing="1.6977" fill="#080808" xml:space="preserve"><tspan fill="#660e7a" font-weight="bold" font-style="italic">log</tspan><tspan>.warn(</tspan><tspan fill="#660e7a" font-weight="bold" font-style="italic">sm</tspan><tspan>.getString(</tspan></text>
<rect x="1628" y="326.5" width="79" height="46.5" rx="6" fill="#f3f3f3"/>
<text x="1638.5" y="359.2" font-family="'Liberation Sans','Noto Sans CJK SC',sans-serif" font-size="27.5" fill="#787878" textLength="58.5" lengthAdjust="spacing" >key:</text>
<text x="1712.9" y="361" font-family="'DejaVu Sans Mono','Liberation Mono',monospace" font-size="30.4" letter-spacing="1.6977" fill="#080808" xml:space="preserve"><tspan fill="#008000" font-weight="bold">"containerBase.backgroundProcess.realm"</tspan><tspan>, realm), e);</tspan></text>
<text x="1105.1" y="417" font-family="'DejaVu Sans Mono','Liberation Mono',monospace" font-size="30.4" letter-spacing="1.6977" fill="#080808" xml:space="preserve"><tspan>}</tspan></text>
<text x="1025.1" y="473" font-family="'DejaVu Sans Mono','Liberation Mono',monospace" font-size="30.4" letter-spacing="1.6977" fill="#080808" xml:space="preserve"><tspan>}</tspan></text>
<rect x="1145.5" y="531.4" width="138" height="1.5" fill="#1a1a1a" />
<text x="1025.1" y="529" font-family="'DejaVu Sans Mono','Liberation Mono',monospace" font-size="30.4" letter-spacing="1.6977" fill="#080808" xml:space="preserve"><tspan>Valve </tspan><tspan>current</tspan><tspan> = </tspan><tspan font-weight="bold" fill="#000">pipeline</tspan><tspan>.getFirst();</tspan></text>
<rect x="1165.5" y="587.4" width="138" height="1.5" fill="#1a1a1a" />
<text x="1025.1" y="585" font-family="'DejaVu Sans Mono','Liberation Mono',monospace" font-size="30.4" letter-spacing="1.6977" fill="#080808" xml:space="preserve"><tspan fill="#000080" font-weight="bold">while</tspan><tspan> (</tspan><tspan>current</tspan><tspan> != </tspan><tspan fill="#000080" font-weight="bold">null</tspan><tspan>) {</tspan></text>
<text x="1105.1" y="641" font-family="'DejaVu Sans Mono','Liberation Mono',monospace" font-size="30.4" letter-spacing="1.6977" fill="#080808" xml:space="preserve"><tspan fill="#000080" font-weight="bold">try</tspan><tspan> {</tspan></text>
<rect x="1185.5" y="699.4" width="138" height="1.5" fill="#1a1a1a" />
<text x="1185.1" y="697" font-family="'DejaVu Sans Mono','Liberation Mono',monospace" font-size="30.4" letter-spacing="1.6977" fill="#080808" xml:space="preserve"><tspan>current</tspan><tspan>.backgroundProcess();</tspan></text>
<text x="1105.1" y="753" font-family="'DejaVu Sans Mono','Liberation Mono',monospace" font-size="30.4" letter-spacing="1.6977" fill="#080808" xml:space="preserve"><tspan>} </tspan><tspan fill="#000080" font-weight="bold">catch</tspan><tspan> (Exception e) {</tspan></text>
<text x="1185.1" y="809" font-family="'DejaVu Sans Mono','Liberation Mono',monospace" font-size="30.4" letter-spacing="1.6977" fill="#080808" xml:space="preserve"><tspan fill="#660e7a" font-weight="bold" font-style="italic">log</tspan><tspan>.warn(</tspan><tspan fill="#660e7a" font-weight="bold" font-style="italic">sm</tspan><tspan>.getString(</tspan></text>
<rect x="1628" y="774.5" width="79" height="46.5" rx="6" fill="#f3f3f3"/>
<text x="1638.5" y="807.2" font-family="'Liberation Sans','Noto Sans CJK SC',sans-serif" font-size="27.5" fill="#787878" textLength="58.5" lengthAdjust="spacing" >key:</text>
<rect x="2533.3" y="811.4" width="138" height="1.5" fill="#1a1a1a" />
<text x="1712.9" y="809" font-family="'DejaVu Sans Mono','Liberation Mono',monospace" font-size="30.4" letter-spacing="1.6977" fill="#080808" xml:space="preserve"><tspan fill="#008000" font-weight="bold">"containerBase.backgroundProcess.valve"</tspan><tspan>, </tspan><tspan>current</tspan><tspan>), e);</tspan></text>
<text x="1105.1" y="865" font-family="'DejaVu Sans Mono','Liberation Mono',monospace" font-size="30.4" letter-spacing="1.6977" fill="#080808" xml:space="preserve"><tspan>}</tspan></text>
<rect x="1105.5" y="923.4" width="138" height="1.5" fill="#1a1a1a" />
<rect x="1305.5" y="923.4" width="138" height="1.5" fill="#1a1a1a" />
<text x="1105.1" y="921" font-family="'DejaVu Sans Mono','Liberation Mono',monospace" font-size="30.4" letter-spacing="1.6977" fill="#080808" xml:space="preserve"><tspan>current</tspan><tspan> = </tspan><tspan>current</tspan><tspan>.getNext();</tspan></text>
<text x="1025.1" y="977" font-family="'DejaVu Sans Mono','Liberation Mono',monospace" font-size="30.4" letter-spacing="1.6977" fill="#080808" xml:space="preserve"><tspan>}</tspan></text>
<text x="1025.1" y="1033" font-family="'DejaVu Sans Mono','Liberation Mono',monospace" font-size="30.4" letter-spacing="1.6977" fill="#080808" xml:space="preserve"><tspan>fireLifecycleEvent(Lifecycle.</tspan><tspan fill="#660e7a" font-weight="bold" font-style="italic">PERIODIC_EVENT</tspan><tspan>, </tspan></text>
<rect x="1928.5" y="998.5" width="91" height="46.5" rx="6" fill="#f3f3f3"/>
<text x="1939" y="1031.2" font-family="'Liberation Sans','Noto Sans CJK SC',sans-serif" font-size="27.5" fill="#787878" textLength="70" lengthAdjust="spacing" >data:</text>
<text x="2024.1" y="1033" font-family="'DejaVu Sans Mono','Liberation Mono',monospace" font-size="30.4" letter-spacing="1.6977" fill="#080808" xml:space="preserve"><tspan fill="#000080" font-weight="bold">null</tspan><tspan>);</tspan></text>
<text x="945.1" y="1089" font-family="'DejaVu Sans Mono','Liberation Mono',monospace" font-size="30.4" letter-spacing="1.6977" fill="#080808" xml:space="preserve"><tspan>}</tspan></text>
</g>
<rect x="998" y="496" width="1850" height="516" rx="2" fill="none" stroke="#cd3a2b" stroke-width="8"/>
<text x="1778" y="644" font-family="'Liberation Sans','Noto Sans CJK SC',sans-serif" font-size="38" fill="#cb3f2d" textLength="75" lengthAdjust="spacing" >遍历</text>
<text x="1862" y="644" font-family="'Liberation Sans','Noto Sans CJK SC',sans-serif" font-size="37.5" fill="#cb3f2d" textLength="126" lengthAdjust="spacing" stroke="#cb3f2d" stroke-width="0.5">pipline</text>
<text x="1997" y="644" font-family="'Liberation Sans','Noto Sans CJK SC',sans-serif" font-size="38" fill="#cb3f2d" textLength="113" lengthAdjust="spacing" >中所有</text>
<text x="2119" y="644" font-family="'Liberation Sans','Noto Sans CJK SC',sans-serif" font-size="37.5" fill="#cb3f2d" textLength="94" lengthAdjust="spacing" stroke="#cb3f2d" stroke-width="0.5">valve</text>
<text x="2223" y="644" font-family="'Liberation Sans','Noto Sans CJK SC',sans-serif" font-size="38" fill="#cb3f2d" >的</text>
<text x="2267" y="644" font-family="'Liberation Sans','Noto Sans CJK SC',sans-serif" font-size="37.5" fill="#cb3f2d" textLength="380" lengthAdjust="spacing" stroke="#cb3f2d" stroke-width="0.5">backgroundProcess</text>
<rect x="41.5" y="1148" width="3242.5" height="2" fill="#d1d1d1" />
<rect x="41.5" y="1150" width="3242.5" height="52" fill="#e3e6ee" />
<rect x="41.5" y="1202" width="3242.5" height="3.6" fill="#cfcfd5" />
<rect x="41.5" y="1206" width="3242.5" height="836" fill="#fff" />
<rect x="41.5" y="1206" width="56.5" height="836" fill="#f2f2f2" />
<rect x="98" y="1206" width="1.5" height="836" fill="#d1d1d1" />
<text x="54" y="1185.5" font-family="'Liberation Sans','Noto Sans CJK SC',sans-serif" font-size="24.6" fill="#111" textLength="222" lengthAdjust="spacing" >Sequence Diagram:</text>
<text x="314.5" y="1185.5" font-family="'Liberation Sans','Noto Sans CJK SC',sans-serif" font-size="24.6" fill="#111" textLength="82" lengthAdjust="spacing" >Open...</text>
<path d="M411 1171.5 L425.5 1185.5 M425.5 1171.5 L411 1185.5" fill="none" stroke="#b0b0b0" stroke-width="1.7" />
<text x="472.5" y="1185.5" font-family="'Liberation Sans','Noto Sans CJK SC',sans-serif" font-size="24.6" fill="#111" textLength="415.5" lengthAdjust="spacing" >ContainerBase.backgroundProcess()</text>
<path d="M904 1171.5 L918.5 1185.5 M918.5 1171.5 L904 1185.5" fill="none" stroke="#b0b0b0" stroke-width="1.7" />
<rect x="448" y="1198" width="420" height="5.6" fill="#4083c9" />
<path d="M59.5 1227 L70.5 1234 L59.5 1241 Z M71 1227 L82 1234 L71 1241 Z" fill="#6e6e6e" />
<g fill="none" stroke="#6e6e6e" stroke-width="2"><path d="M70 1275.5 H79.5 V1297 H60.5 V1291"/></g>
<path d="M58 1283 L68 1274.5 L68 1280 Q77 1280 77 1292 Q74 1286.5 68 1286.5 L68 1291.5 Z" fill="#6e6e6e" />
<path d="M65 1325.5 H80.5 V1351 H59 V1331.5 Z" fill="none" stroke="#333333" stroke-width="1.8" />
<path d="M65 1325.5 V1331.5 H59" fill="none" stroke="#333333" stroke-width="1.4" />
<text x="62.6" y="1346.8" font-family="'Liberation Serif','DejaVu Serif',serif" font-size="20.5" fill="#333333" >T</text>
<path d="M65 1377.5 H80.5 V1403 H59 V1383.5 Z" fill="none" stroke="#c2c2c2" stroke-width="1.8" />
<path d="M65 1377.5 V1383.5 H59" fill="none" stroke="#c2c2c2" stroke-width="1.4" />
<text x="62.6" y="1398.8" font-family="'Liberation Serif','DejaVu Serif',serif" font-size="20.5" fill="#c2c2c2" >T</text>
<line x1="150.2" y1="1263.4" x2="150.2" y2="2009.6" stroke="#111" stroke-width="2.1" stroke-dasharray="26 10"/>
<line x1="417.2" y1="1263.4" x2="417.2" y2="2009.6" stroke="#111" stroke-width="2.1" stroke-dasharray="26 10"/>
<line x1="709.2" y1="1263.4" x2="709.2" y2="2009.6" stroke="#111" stroke-width="2.1" stroke-dasharray="26 10"/>
<line x1="810.7" y1="1263.4" x2="810.7" y2="2009.6" stroke="#111" stroke-width="2.1" stroke-dasharray="26 10"/>
<line x1="900.2" y1="1263.4" x2="900.2" y2="2009.6" stroke="#111" stroke-width="2.1" stroke-dasharray="26 10"/>
<line x1="1028.7" y1="1263.4" x2="1028.7" y2="2009.6" stroke="#111" stroke-width="2.1" stroke-dasharray="26 10"/>
<line x1="1265.2" y1="1263.4" x2="1265.2" y2="2009.6" stroke="#111" stroke-width="2.1" stroke-dasharray="26 10"/>
<line x1="1459.2" y1="1263.4" x2="1459.2" y2="2009.6" stroke="#111" stroke-width="2.1" stroke-dasharray="26 10"/>
<rect x="111" y="1217" width="77" height="45" fill="#ffffbf" stroke="#1c1c1c" stroke-width="2.2"/>
<text x="120.5" y="1247" font-family="'DejaVu Sans','Liberation Sans',sans-serif" font-size="21.6" fill="#333" textLength="58.5" lengthAdjust="spacing" >Actor</text>
<rect x="331" y="1217" width="171" height="45" fill="#ffffbf" stroke="#1c1c1c" stroke-width="2.2"/>
<text x="342" y="1247" font-family="'DejaVu Sans','Liberation Sans',sans-serif" font-size="21.6" fill="#333" font-style="italic" textLength="153" lengthAdjust="spacing" >ContainerBase</text>
<rect x="661" y="1217" width="95" height="45" fill="#c4f5c8" stroke="#1c1c1c" stroke-width="2.2"/>
<text x="671.5" y="1247" font-family="'DejaVu Sans','Liberation Sans',sans-serif" font-size="21.6" fill="#333" font-style="italic" textLength="75" lengthAdjust="spacing" >Cluster</text>
<rect x="769" y="1217" width="82" height="45" fill="#c4f5c8" stroke="#1c1c1c" stroke-width="2.2"/>
<text x="779.5" y="1247" font-family="'DejaVu Sans','Liberation Sans',sans-serif" font-size="21.6" fill="#333" font-style="italic" textLength="62" lengthAdjust="spacing" >Realm</text>
<rect x="863" y="1217" width="73" height="45" fill="#c4f5c8" stroke="#1c1c1c" stroke-width="2.2"/>
<text x="873.5" y="1247" font-family="'DejaVu Sans','Liberation Sans',sans-serif" font-size="21.6" fill="#333" font-style="italic" textLength="53" lengthAdjust="spacing" >Valve</text>
<rect x="948" y="1217" width="158" height="45" fill="#ffffbf" stroke="#1c1c1c" stroke-width="2.2"/>
<text x="959" y="1247" font-family="'DejaVu Sans','Liberation Sans',sans-serif" font-size="21.6" fill="#333" font-style="italic" textLength="140.5" lengthAdjust="spacing" >LifecycleBase</text>
<rect x="1181" y="1217" width="167" height="45" fill="#ffffbf" stroke="#1c1c1c" stroke-width="2.2"/>
<text x="1190" y="1247" font-family="'DejaVu Sans','Liberation Sans',sans-serif" font-size="21.6" fill="#333" textLength="150.5" lengthAdjust="spacing" >LifecycleEvent</text>
<rect x="1361" y="1217" width="195" height="45" fill="#c4f5c8" stroke="#1c1c1c" stroke-width="2.2"/>
<text x="1371" y="1247" font-family="'DejaVu Sans','Liberation Sans',sans-serif" font-size="21.6" fill="#333" font-style="italic" textLength="177.5" lengthAdjust="spacing" >LifecycleListener</text>
<line x1="154" y1="1370.6" x2="401" y2="1370.6" stroke="#111" stroke-width="1.8" />
<path d="M408.6 1370.6 L399 1364.6 L399 1376.6 Z" fill="#111" />
<text x="165" y="1354" font-family="'DejaVu Sans','Liberation Sans',sans-serif" font-size="21.6" fill="#111" textLength="232" lengthAdjust="spacing" >1:backgroundProcess</text>
<line x1="425" y1="1418.6" x2="693" y2="1418.6" stroke="#111" stroke-width="1.8" stroke-dasharray="13.6 4.4"/>
<path d="M700.6 1418.6 L691 1412.6 L691 1424.6 Z" fill="#111" />
<line x1="700.6" y1="1466.6" x2="426" y2="1466.6" stroke="#111" stroke-width="1.8" stroke-dasharray="21.5 8.5"/>
<path d="M436.2 1460.0 L425.6 1466.6 L436.2 1473.1999999999998" fill="none" stroke="#111" stroke-width="1.9" />
<text x="438.5" y="1401.6" font-family="'DejaVu Sans','Liberation Sans',sans-serif" font-size="21.6" fill="#111" font-style="italic" textLength="251.5" lengthAdjust="spacing" >1.1:backgroundProcess</text>
<line x1="425" y1="1514.6" x2="795" y2="1514.6" stroke="#111" stroke-width="1.8" stroke-dasharray="13.6 4.4"/>
<path d="M802.6 1514.6 L793 1508.6 L793 1520.6 Z" fill="#111" />
<line x1="802.6" y1="1562.6" x2="426" y2="1562.6" stroke="#111" stroke-width="1.8" stroke-dasharray="21.5 8.5"/>
<path d="M436.2 1556.0 L425.6 1562.6 L436.2 1569.1999999999998" fill="none" stroke="#111" stroke-width="1.9" />
<text x="540.5" y="1497.6" font-family="'DejaVu Sans','Liberation Sans',sans-serif" font-size="21.6" fill="#111" font-style="italic" textLength="251.5" lengthAdjust="spacing" >1.2:backgroundProcess</text>
<line x1="425" y1="1610.6" x2="885" y2="1610.6" stroke="#111" stroke-width="1.8" stroke-dasharray="13.6 4.4"/>
<path d="M892.6 1610.6 L883 1604.6 L883 1616.6 Z" fill="#111" />
<line x1="892.6" y1="1658.6" x2="426" y2="1658.6" stroke="#111" stroke-width="1.8" stroke-dasharray="21.5 8.5"/>
<path d="M436.2 1652.0 L425.6 1658.6 L436.2 1665.1999999999998" fill="none" stroke="#111" stroke-width="1.9" />
<text x="630" y="1593.6" font-family="'DejaVu Sans','Liberation Sans',sans-serif" font-size="21.6" fill="#111" font-style="italic" textLength="251.5" lengthAdjust="spacing" >1.3:backgroundProcess</text>
<line x1="425" y1="1706.6" x2="1013" y2="1706.6" stroke="#111" stroke-width="1.8" stroke-dasharray="13.6 4.4"/>
<path d="M1020.6 1706.6 L1011 1700.6 L1011 1712.6 Z" fill="#111" />
<text x="785.5" y="1689.6" font-family="'DejaVu Sans','Liberation Sans',sans-serif" font-size="21.6" fill="#111" textLength="224.5" lengthAdjust="spacing" >1.4:fireLifecycleEvent</text>
<line x1="1037" y1="1754.6" x2="1249" y2="1754.6" stroke="#111" stroke-width="1.8" stroke-dasharray="13.6 4.4"/>
<path d="M1256.6 1754.6 L1247 1748.6 L1247 1760.6 Z" fill="#111" />
<line x1="1256.6" y1="1802.6" x2="1038" y2="1802.6" stroke="#111" stroke-width="1.8" stroke-dasharray="21.5 8.5"/>
<path d="M1048.2 1796.0 L1037.6 1802.6 L1048.2 1809.1999999999998" fill="none" stroke="#111" stroke-width="1.9" />
<text x="1050" y="1738" font-family="'DejaVu Sans','Liberation Sans',sans-serif" font-size="21.6" fill="#111" textLength="193.5" lengthAdjust="spacing" >1.4.1:&lt;&lt;create&gt;&gt;</text>
<line x1="1037" y1="1850.6" x2="1443" y2="1850.6" stroke="#111" stroke-width="1.8" stroke-dasharray="13.6 4.4"/>
<path d="M1450.6 1850.6 L1441 1844.6 L1441 1856.6 Z" fill="#111" />
<line x1="1450.6" y1="1898.6" x2="1038" y2="1898.6" stroke="#111" stroke-width="1.8" stroke-dasharray="21.5 8.5"/>
<path d="M1048.2 1892.0 L1037.6 1898.6 L1048.2 1905.1999999999998" fill="none" stroke="#111" stroke-width="1.9" />
<text x="1238.5" y="1833" font-family="'DejaVu Sans','Liberation Sans',sans-serif" font-size="21.6" fill="#111" font-style="italic" textLength="203" lengthAdjust="spacing" >1.4.2:lifecycleEvent</text>
<line x1="1020.6" y1="1946.6" x2="426" y2="1946.6" stroke="#111" stroke-width="1.8" stroke-dasharray="21.5 8.5"/>
<path d="M436.2 1940.0 L425.6 1946.6 L436.2 1953.1999999999998" fill="none" stroke="#111" stroke-width="1.9" />
<rect x="408.3" y="1370.6" width="16.6" height="622.2" fill="#ffdd9f" stroke="#111" stroke-width="1.6"/>
<rect x="700.2" y="1418.6" width="16.6" height="46" fill="#ffdd9f" stroke="#111" stroke-width="1.6"/>
<rect x="802.2" y="1514.6" width="16.6" height="46" fill="#ffdd9f" stroke="#111" stroke-width="1.6"/>
<rect x="891.7" y="1610.6" width="16.6" height="46" fill="#ffdd9f" stroke="#111" stroke-width="1.6"/>
<rect x="1020.2" y="1706.6" width="16.6" height="238" fill="#ffdd9f" stroke="#111" stroke-width="1.6"/>
<rect x="1256.2" y="1754.6" width="16.6" height="46" fill="#ffdd9f" stroke="#111" stroke-width="1.6"/>
<rect x="1450.2" y="1850.6" width="16.6" height="46" fill="#ffdd9f" stroke="#111" stroke-width="1.6"/>
<rect x="853.8" y="1201.8" width="98.2" height="817" rx="3" fill="none" stroke="#cd3a2b" stroke-width="7.6"/></svg></body></html>
